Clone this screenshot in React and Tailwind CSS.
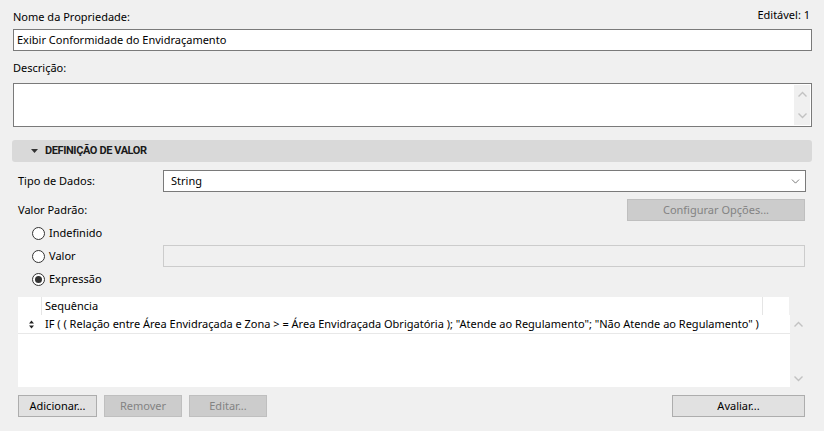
import { ChevronDown } from 'lucide-react';

function ScrollArrow({ dir }) {
  return (
    <svg width="9" height="6" viewBox="0 0 9 6" className="block shrink-0">
      {dir === 'up' ? (
        <path d="M0.5 5.5 L4.5 1.5 L8.5 5.5" fill="none" stroke="#c2c2c2" strokeWidth="1.4" />
      ) : (
        <path d="M0.5 0.5 L4.5 4.5 L8.5 0.5" fill="none" stroke="#c2c2c2" strokeWidth="1.4" />
      )}
    </svg>
  );
}

function Radio({ label, checked }) {
  return (
    <div className="flex items-center h-[23px] pl-[14px]">
      <span className="w-[13px] h-[13px] rounded-full border border-[#333333] bg-white flex items-center justify-center">
        {checked && <span className="w-[7px] h-[7px] rounded-full bg-[#333333]" />}
      </span>
      <span className="ml-[4px]">{label}</span>
    </div>
  );
}

function Btn({ children, disabled, className = '' }) {
  return (
    <div
      className={
        'h-[22px] flex items-center justify-center border ' +
        (disabled
          ? 'bg-[#cccccc] border-[#bfbfbf] text-[#838383] '
          : 'bg-[#e1e1e1] border-[#adadad] text-black ') +
        className
      }
    >
      {children}
    </div>
  );
}

export default function App() {
  return (
    <div
      className="w-[824px] h-[431px] bg-[#f0f0f0] text-[11px] text-black overflow-hidden"
      style={{ fontFamily: '"Noto Sans", "Open Sans", sans-serif' }}
    >
      {/* Nome / Descrição */}
      <div className="pl-[13px] pr-[12px]">
        <div className="h-[29px] flex justify-between">
          <span className="pt-[9px] leading-[16px]">Nome da Propriedade:</span>
          <span className="pt-[7px] pr-[2px] leading-[16px]">Editável: 1</span>
        </div>
        <div className="h-[22px] border border-[#7a7a7a] bg-white px-[3px] leading-[20px]">
          Exibir Conformidade do Envidraçamento
        </div>
        <div className="h-[32px] pt-[9px] leading-[16px]">Descrição:</div>
        <div className="h-[44px] border border-[#7a7a7a] bg-white flex">
          <div className="flex-1" />
          <div className="w-[16px] m-[1px] bg-[#f0f0f0] flex flex-col items-center justify-between py-[6px]">
            <ScrollArrow dir="up" />
            <ScrollArrow dir="down" />
          </div>
        </div>
      </div>

      {/* Definição de valor */}
      <div className="ml-[12px] mr-[12px] mt-[13px] h-[22px] bg-[#d9d9d9] rounded-[3px] flex items-center">
        <svg width="7" height="4" viewBox="0 0 7 4" className="ml-[19px]">
          <path d="M0 0 L7 0 L3.5 4 Z" fill="#333333" />
        </svg>
        <span
          className="ml-[7px] font-bold text-[11px] tracking-[-0.4px] text-[#1a1a1a]"
          style={{ fontFamily: 'Roboto, "Noto Sans", sans-serif' }}
        >
          DEFINIÇÃO DE VALOR
        </span>
      </div>

      <div className="pl-[18px] pr-[18px]">
        <div className="mt-[8px] h-[22px] flex items-center">
          <span className="w-[145px]">Tipo de Dados:</span>
          <div className="flex-1 h-[22px] border border-[#7a7a7a] bg-white flex items-center pl-[7px] pr-[3px]">
            <span className="flex-1">String</span>
            <ChevronDown size={13} strokeWidth={1.3} className="text-[#444444]" />
          </div>
        </div>

        <div className="mt-[7px] h-[22px] flex items-center justify-between">
          <span>Valor Padrão:</span>
          <Btn disabled className="w-[178px] mr-[1px]">Configurar Opções...</Btn>
        </div>

        <div className="mt-[1px] flex">
          <div className="w-[145px]">
            <Radio label="Indefinido" />
            <Radio label="Valor" />
            <Radio label="Expressão" checked />
          </div>
          <div className="flex-1 pt-[23px]">
            <div className="h-[22px] border border-[#cccccc] bg-[#f0f0f0] mr-[1px]" />
          </div>
        </div>

        {/* Lista de expressões */}
        <div className="mt-[6px] h-[90px] flex flex-col">
          <div className="h-[18px] flex">
            <div className="w-[771px] bg-white flex">
              <div className="w-[24px] border-r border-[#e5e5e5]" />
              <div className="flex-1 pl-[3px] leading-[18px] border-r border-[#e5e5e5]">Sequência</div>
              <div className="w-[26px]" />
            </div>
          </div>
          <div className="flex-1 flex">
            <div className="w-[772px] bg-white overflow-hidden">
              <div className="h-[19px] flex items-center border-b border-[#e8e8e8]">
                <svg width="5" height="9" viewBox="0 0 5 9" className="ml-[11px] shrink-0">
                  <path d="M0 3.5 L2.5 0.5 L5 3.5 Z M0 5.5 L2.5 8.5 L5 5.5 Z" fill="#222222" />
                </svg>
                <span className="ml-[11px] whitespace-nowrap">
                  IF ( ( Relação entre Área Envidraçada e Zona &gt; = Área Envidraçada Obrigatória ); "Atende ao Regulamento"; "Não Atende ao Regulamento" )
                </span>
              </div>
            </div>
            <div className="flex-1 flex flex-col items-center justify-between pt-[6px] pb-[5px]">
              <ScrollArrow dir="up" />
              <ScrollArrow dir="down" />
            </div>
          </div>
        </div>

        <div className="mt-[8px] flex items-center">
          <Btn className="w-[79px]">Adicionar...</Btn>
          <Btn disabled className="w-[78px] ml-[7px]">Remover</Btn>
          <Btn disabled className="w-[78px] ml-[7px]">Editar...</Btn>
          <div className="flex-1" />
          <Btn className="w-[133px] mr-[1px]">Avaliar...</Btn>
        </div>
      </div>
    </div>
  );
}
